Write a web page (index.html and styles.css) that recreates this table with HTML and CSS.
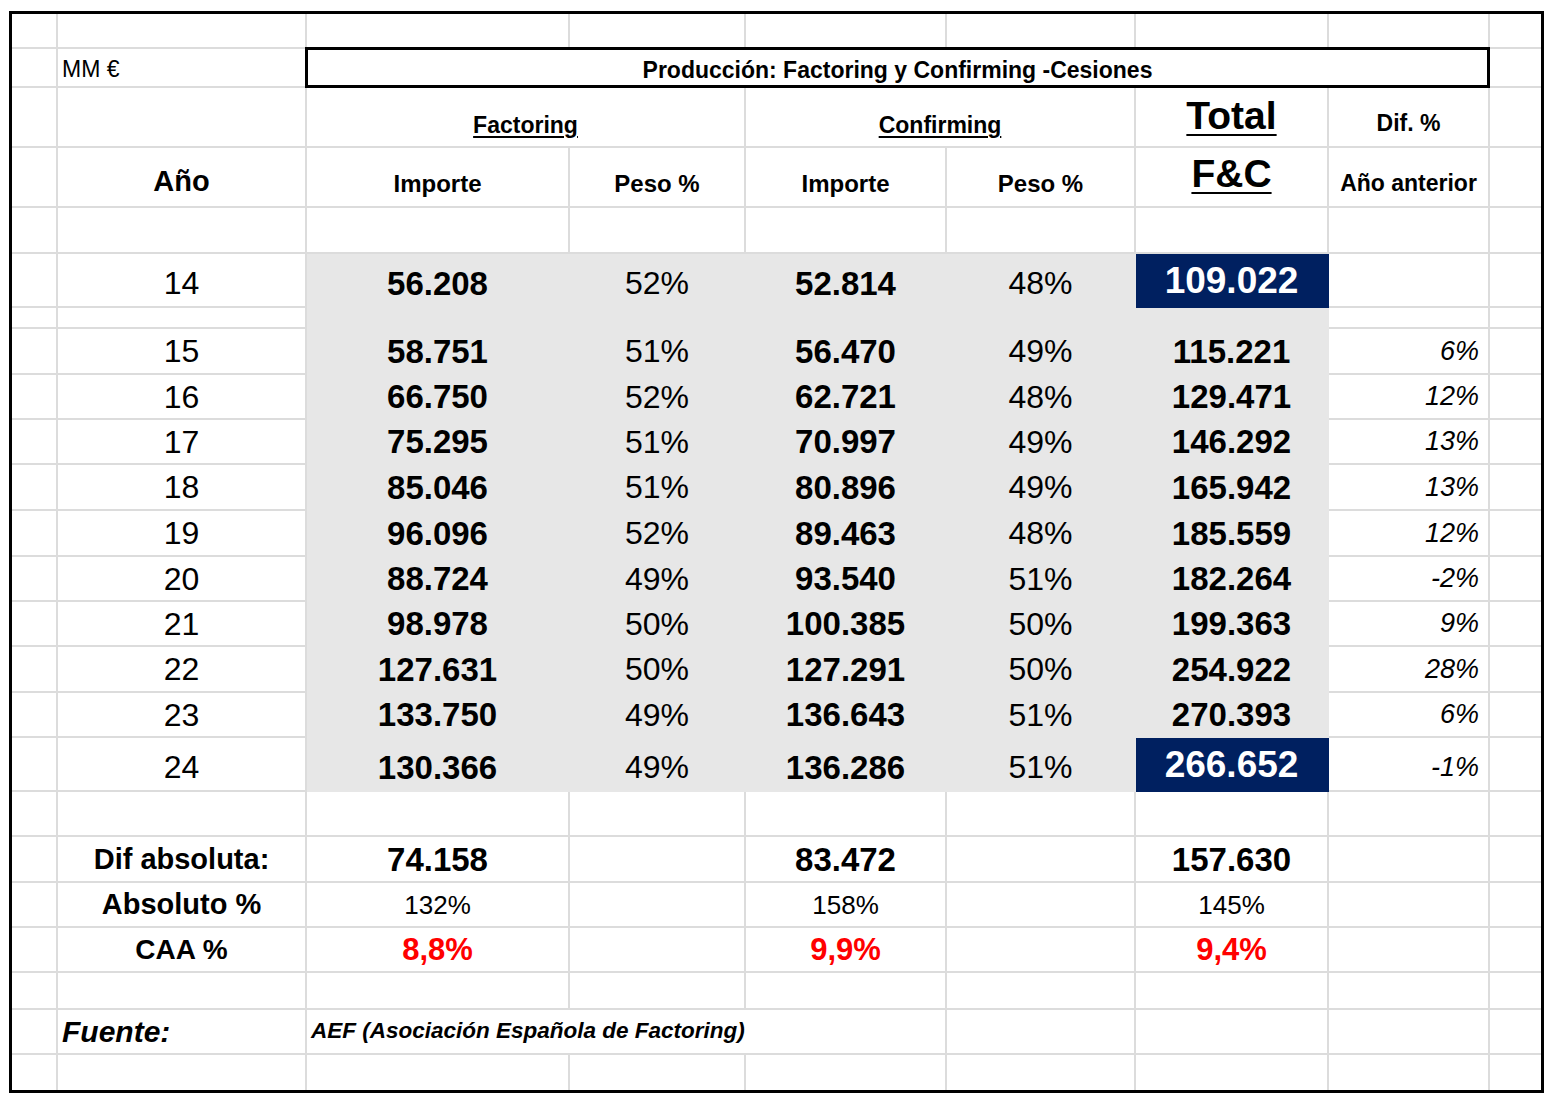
FILE: index.html
```html
<!DOCTYPE html>
<html lang="es">
<head>
<meta charset="utf-8">
<title>Producción: Factoring y Confirming - Cesiones</title>
<link rel="stylesheet" href="styles.css">
</head>
<body>
<div class="sheet">
  <!-- R1 -->
  <div class="c"></div><div class="c"></div><div class="c"></div><div class="c"></div><div class="c"></div><div class="c"></div><div class="c"></div><div class="c"></div><div class="c"></div>
  <!-- R2 -->
  <div class="c"></div>
  <div class="c unit">MM €</div>
  <div class="c title">Producción: Factoring y Confirming -Cesiones</div>
  <div class="c"></div>
  <!-- R3 -->
  <div class="c"></div><div class="c"></div>
  <div class="c h group span2"><span class="ul">Factoring</span></div>
  <div class="c h group span2"><span class="ul">Confirming</span></div>
  <div class="c h big big-top"><span class="ul ul-big">Total</span></div>
  <div class="c h sub sub-top">Dif. %</div>
  <div class="c"></div>
  <!-- R4 -->
  <div class="c"></div>
  <div class="c h year-h">Año</div>
  <div class="c h col-h">Importe</div>
  <div class="c h col-h">Peso %</div>
  <div class="c h col-h">Importe</div>
  <div class="c h col-h">Peso %</div>
  <div class="c h big big-bot"><span class="ul ul-big">F&amp;C</span></div>
  <div class="c h sub sub-bot">Año anterior</div>
  <div class="c"></div>
  <!-- R5 -->
  <div class="c"></div><div class="c"></div><div class="c"></div><div class="c"></div><div class="c"></div><div class="c"></div><div class="c"></div><div class="c"></div><div class="c"></div>
  <!-- R6: 14 -->
  <div class="c"></div>
  <div class="c yr tall">14</div>
  <div class="c g num tall">56.208</div>
  <div class="c g pct tall">52%</div>
  <div class="c g num tall">52.814</div>
  <div class="c g pct tall">48%</div>
  <div class="c navy">109.022</div>
  <div class="c"></div>
  <div class="c"></div>
  <!-- R7 spacer -->
  <div class="c"></div><div class="c"></div>
  <div class="c g"></div><div class="c g"></div><div class="c g"></div><div class="c g"></div><div class="c g"></div>
  <div class="c"></div><div class="c"></div>
  <!-- R8: 15 -->
  <div class="c"></div><div class="c yr">15</div>
  <div class="c g num">58.751</div><div class="c g pct">51%</div><div class="c g num">56.470</div><div class="c g pct">49%</div><div class="c g num">115.221</div>
  <div class="c dif">6%</div><div class="c"></div>
  <!-- R9: 16 -->
  <div class="c"></div><div class="c yr">16</div>
  <div class="c g num">66.750</div><div class="c g pct">52%</div><div class="c g num">62.721</div><div class="c g pct">48%</div><div class="c g num">129.471</div>
  <div class="c dif">12%</div><div class="c"></div>
  <!-- R10: 17 -->
  <div class="c"></div><div class="c yr">17</div>
  <div class="c g num">75.295</div><div class="c g pct">51%</div><div class="c g num">70.997</div><div class="c g pct">49%</div><div class="c g num">146.292</div>
  <div class="c dif">13%</div><div class="c"></div>
  <!-- R11: 18 -->
  <div class="c"></div><div class="c yr">18</div>
  <div class="c g num">85.046</div><div class="c g pct">51%</div><div class="c g num">80.896</div><div class="c g pct">49%</div><div class="c g num">165.942</div>
  <div class="c dif">13%</div><div class="c"></div>
  <!-- R12: 19 -->
  <div class="c"></div><div class="c yr">19</div>
  <div class="c g num">96.096</div><div class="c g pct">52%</div><div class="c g num">89.463</div><div class="c g pct">48%</div><div class="c g num">185.559</div>
  <div class="c dif">12%</div><div class="c"></div>
  <!-- R13: 20 -->
  <div class="c"></div><div class="c yr">20</div>
  <div class="c g num">88.724</div><div class="c g pct">49%</div><div class="c g num">93.540</div><div class="c g pct">51%</div><div class="c g num">182.264</div>
  <div class="c dif">-2%</div><div class="c"></div>
  <!-- R14: 21 -->
  <div class="c"></div><div class="c yr">21</div>
  <div class="c g num">98.978</div><div class="c g pct">50%</div><div class="c g num">100.385</div><div class="c g pct">50%</div><div class="c g num">199.363</div>
  <div class="c dif">9%</div><div class="c"></div>
  <!-- R15: 22 -->
  <div class="c"></div><div class="c yr">22</div>
  <div class="c g num">127.631</div><div class="c g pct">50%</div><div class="c g num">127.291</div><div class="c g pct">50%</div><div class="c g num">254.922</div>
  <div class="c dif">28%</div><div class="c"></div>
  <!-- R16: 23 -->
  <div class="c"></div><div class="c yr">23</div>
  <div class="c g num">133.750</div><div class="c g pct">49%</div><div class="c g num">136.643</div><div class="c g pct">51%</div><div class="c g num">270.393</div>
  <div class="c dif">6%</div><div class="c"></div>
  <!-- R17: 24 -->
  <div class="c"></div><div class="c yr tall">24</div>
  <div class="c g num tall">130.366</div><div class="c g pct tall">49%</div><div class="c g num tall">136.286</div><div class="c g pct tall">51%</div>
  <div class="c navy">266.652</div>
  <div class="c dif tall">-1%</div><div class="c"></div>
  <!-- R18 -->
  <div class="c"></div><div class="c"></div><div class="c"></div><div class="c"></div><div class="c"></div><div class="c"></div><div class="c"></div><div class="c"></div><div class="c"></div>
  <!-- R19 -->
  <div class="c"></div>
  <div class="c lbl">Dif absoluta:</div>
  <div class="c num">74.158</div><div class="c"></div>
  <div class="c num">83.472</div><div class="c"></div>
  <div class="c num">157.630</div>
  <div class="c"></div><div class="c"></div>
  <!-- R20 -->
  <div class="c"></div>
  <div class="c lbl">Absoluto %</div>
  <div class="c abs">132%</div><div class="c"></div>
  <div class="c abs">158%</div><div class="c"></div>
  <div class="c abs">145%</div>
  <div class="c"></div><div class="c"></div>
  <!-- R21 -->
  <div class="c"></div>
  <div class="c lbl caa-l">CAA %</div>
  <div class="c caa">8,8%</div><div class="c"></div>
  <div class="c caa">9,9%</div><div class="c"></div>
  <div class="c caa">9,4%</div>
  <div class="c"></div><div class="c"></div>
  <!-- R22 -->
  <div class="c"></div><div class="c"></div><div class="c"></div><div class="c"></div><div class="c"></div><div class="c"></div><div class="c"></div><div class="c"></div><div class="c"></div>
  <!-- R23 -->
  <div class="c"></div>
  <div class="c src-l">Fuente:</div>
  <div class="c src span3">AEF (Asociación Española de Factoring)</div>
  <div class="c"></div><div class="c"></div><div class="c"></div>
  <!-- R24 -->
  <div class="c"></div><div class="c"></div><div class="c"></div><div class="c"></div><div class="c"></div><div class="c"></div><div class="c"></div><div class="c"></div><div class="c"></div>
</div>
</body>
</html>
```
FILE: styles.css
```css
* {
  box-sizing: border-box;
}

body {
  margin: 0;
  padding: 11px 0 0 9px;
  background: #ffffff;
  color: #000000;
  font-family: "Liberation Sans", Arial, sans-serif;
}

.sheet {
  display: grid;
  width: 1535px;
  height: 1082px;
  border: 3px solid #000000;
  overflow: hidden;
  grid-template-columns: 46px 249px 263px 176px 201px 189px 193px 161px 53px;
  grid-template-rows: 35px 39px 60px 60px 46px 54px 21px 46px 45px 45px 46px 46px 45px 45px 46px 45px 54px 45px 46px 45px 45px 37px 45px 37px;
}

.c {
  display: flex;
  align-items: center;
  justify-content: center;
  border-right: 2px solid #dcdcdc;
  border-bottom: 2px solid #dcdcdc;
  line-height: 1;
  white-space: nowrap;
  min-width: 0;
}

.span2 { grid-column: span 2; }
.span3 { grid-column: span 3; }

/* unit & title */
.unit {
  justify-content: flex-start;
  align-items: flex-end;
  padding: 0 0 5px 4px;
  font-size: 23px;
}

.title {
  grid-column: span 6;
  margin: -2px 0 0 -2px;
  border: 3px solid #000000;
  align-items: flex-end;
  padding-bottom: 3px;
  font-size: 23px;
  font-weight: bold;
  position: relative;
}

/* headers */
.h {
  font-weight: bold;
  align-items: flex-end;
}

.ul {
  text-decoration: underline;
  text-decoration-thickness: 2px;
  text-underline-offset: 3px;
}

.ul-big {
  text-underline-offset: 5px;
}

.group {
  font-size: 23px;
  padding-bottom: 9px;
}

.big {
  font-size: 39px;
}

.big-top { padding-bottom: 11px; }
.big-bot { padding-bottom: 13px; }

.sub {
  font-size: 23px;
}

.sub-top { padding-bottom: 11px; }
.sub-bot { padding-bottom: 11px; }

.year-h {
  font-size: 29px;
  padding-bottom: 10px;
}

.col-h {
  font-size: 24px;
  padding-bottom: 10px;
}

/* data */
.g {
  background: #e7e7e7;
  border-color: transparent;
}

.yr,
.pct {
  font-size: 32px;
}

.num {
  font-size: 33px;
  font-weight: bold;
}

.tall {
  padding-top: 6px;
}

.navy {
  background: #002060;
  border-color: transparent;
  color: #ffffff;
  font-size: 37px;
  font-weight: bold;
}

.dif {
  justify-content: flex-end;
  padding-right: 9px;
  font-size: 27px;
  font-style: italic;
}

/* summary */
.lbl {
  font-size: 29px;
  font-weight: bold;
}

.caa-l {
  font-size: 28px;
}

.abs {
  font-size: 26px;
}

.caa {
  font-size: 31px;
  font-weight: bold;
  color: #ff0000;
}

.src-l {
  justify-content: flex-start;
  padding-left: 4px;
  font-size: 30px;
  font-weight: bold;
  font-style: italic;
}

.src {
  justify-content: flex-start;
  padding-left: 4px;
  font-size: 22.5px;
  font-weight: bold;
  font-style: italic;
}
```
